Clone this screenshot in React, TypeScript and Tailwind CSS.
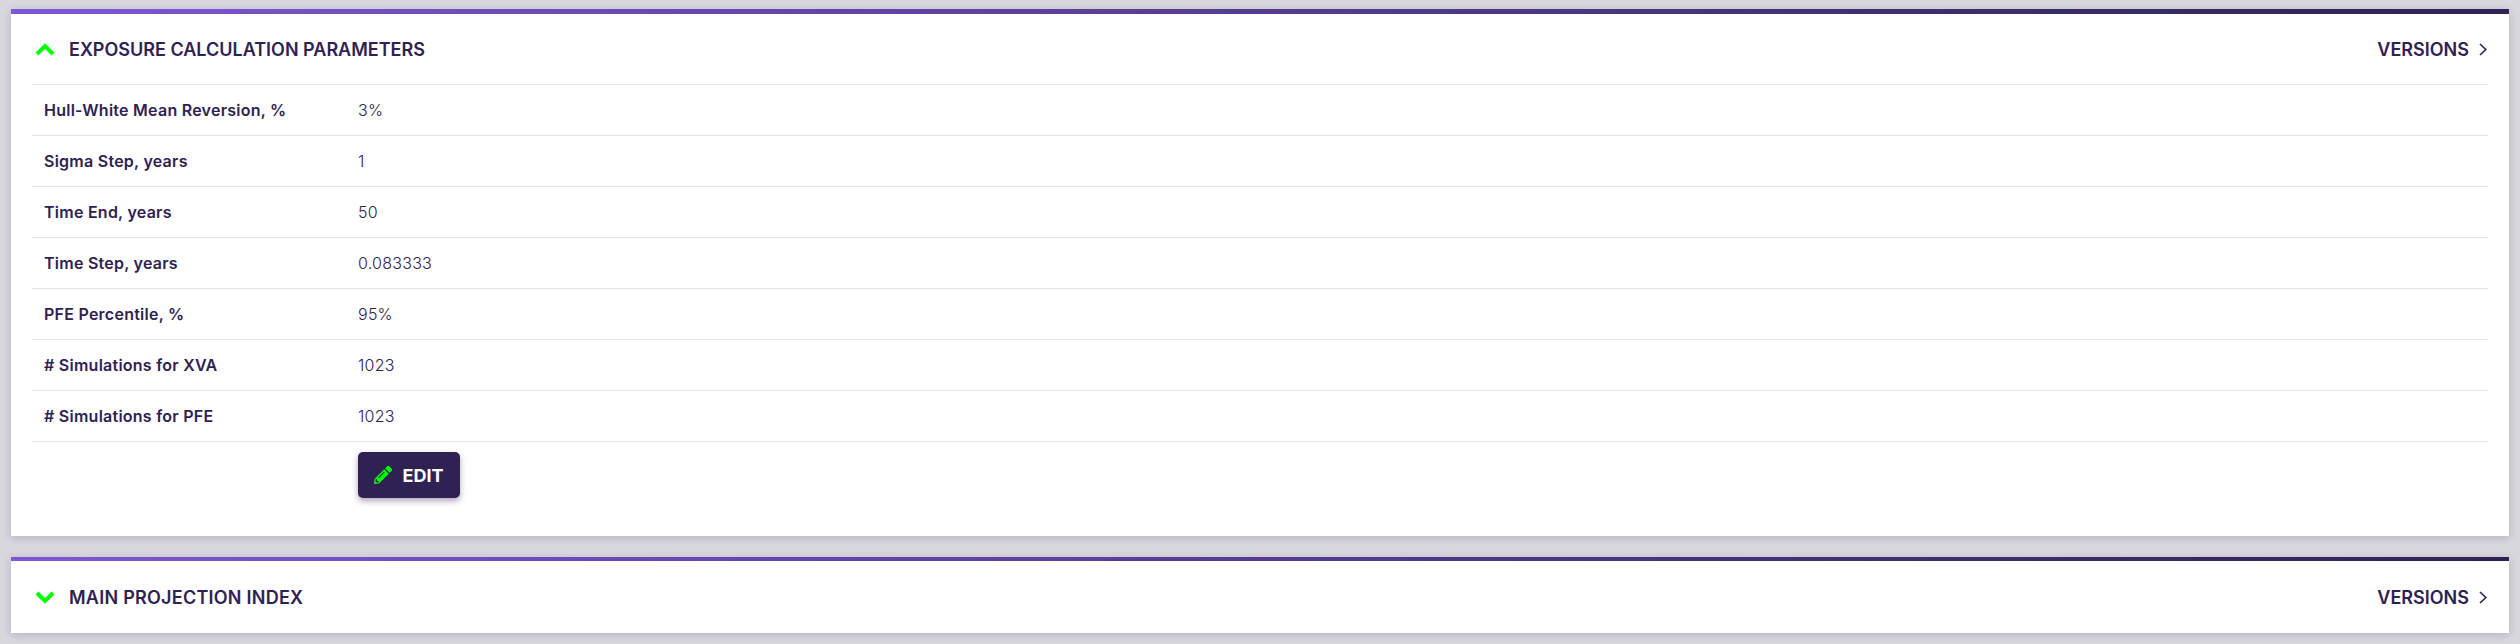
import { FaPencilAlt } from "react-icons/fa";

const params = [
  { label: "Hull-White Mean Reversion, %", value: "3%" },
  { label: "Sigma Step, years", value: "1" },
  { label: "Time End, years", value: "50" },
  { label: "Time Step, years", value: "0.083333" },
  { label: "PFE Percentile, %", value: "95%" },
  { label: "# Simulations for XVA", value: "1023" },
  { label: "# Simulations for PFE", value: "1023" },
];

const Chevron = ({ up }: { up?: boolean }) => (
  <svg width="20" height="14" viewBox="0 0 20 14" className="text-[#00ff00]">
    <path
      d={up ? "M2 12 L10 4 L18 12" : "M2 3 L10 11 L18 3"}
      fill="none"
      stroke="currentColor"
      strokeWidth="4"
    />
  </svg>
);

const CardHeader = ({ title, open }: { title: string; open?: boolean }) => (
  <div className={open ? "flex h-[70px] items-center justify-between pl-[24px] pr-[22px]" : "flex h-[72px] items-center justify-between pl-[24px] pr-[22px]"}>
    <div className="flex items-center gap-[14px]">
      <Chevron up={open} />
      <h2 className={open ? "text-[18px] font-semibold text-[#2f2253]" : "text-[18px] font-semibold tracking-[0.25px] text-[#2f2253]"}>{title}</h2>
    </div>
    <div className="flex items-center gap-[10px] text-[#2f2253]">
      <span className="text-[18px] font-semibold">VERSIONS</span>
      <svg width="8" height="13" viewBox="0 0 8 13">
        <path d="M1 1 L6.8 6.5 L1 12" fill="none" stroke="currentColor" strokeWidth="1.6" />
      </svg>
    </div>
  </div>
);

const App = () => {
  return (
    <div className="h-[644px] overflow-hidden bg-[#d8d7de] px-[11px] pt-[9px] font-['Inter','Liberation_Sans',sans-serif]">
      <section className="bg-white shadow-[0_2px_8px_rgba(47,34,83,0.2)]">
        <div className="h-[5px] bg-gradient-to-r from-[#7e57d6] to-[#2f2253]" />
        <CardHeader title="EXPOSURE CALCULATION PARAMETERS" open />
        <div className="mx-[21px] border-t border-[#e1e3f1]">
          {params.map((p) => (
            <div key={p.label} className="flex h-[51px] items-center border-b border-[#e1e3f1] pl-[12px] text-[16px] tracking-[0.25px]">
              <span className="w-[314px] font-semibold text-[#2f2253]">{p.label}</span>
              <span className="font-[350] text-[#2f2253]">{p.value}</span>
            </div>
          ))}
          <div className="pb-[38px] pl-[326px] pt-[10px]">
            <button className="flex h-[46px] w-[102px] items-center justify-center gap-[10px] rounded-[5px] bg-[#2f2253] text-[18px] font-bold text-white shadow-[0_3px_6px_rgba(47,34,83,0.4)]">
              <FaPencilAlt className="text-[18px] text-[#00ff00]" />
              EDIT
            </button>
          </div>
        </div>
      </section>
      <section className="mt-[21px] bg-white shadow-[0_2px_8px_rgba(47,34,83,0.2)]">
        <div className="h-[4px] bg-gradient-to-r from-[#7e57d6] to-[#2f2253]" />
        <CardHeader title="MAIN PROJECTION INDEX" />
      </section>
    </div>
  );
};

export default App;
